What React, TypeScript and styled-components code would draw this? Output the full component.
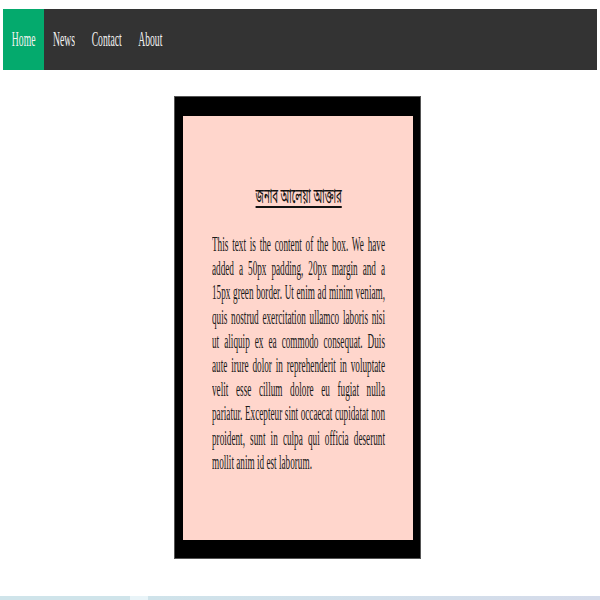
import React from "react";
import styled, { createGlobalStyle } from "styled-components";

const SQUEEZE = 0.46;

const GlobalStyle = createGlobalStyle`
  html, body { margin: 0; padding: 0; background: #ffffff; }
  body {
    padding: 9px 3px 0;
    font-family: "Liberation Serif", "Times New Roman", serif;
    color: #111111;
    overflow: hidden;
  }
`;

const Page = styled.div`
  display: flex;
  flex-direction: column;
`;

const NavBar = styled.nav`
  display: flex;
  align-items: stretch;
  height: 61px;
  background: #333333;
`;

const NavLink = styled.a<{ $w: number; $active?: boolean }>`
  display: flex;
  align-items: center;
  justify-content: center;
  width: ${(p) => p.$w}px;
  background: ${(p) => (p.$active ? "#04aa6d" : "transparent")};
  color: #f2f2f2;
  text-decoration: none;
  overflow: visible;
`;

const Squeeze = styled.span<{ $size: number }>`
  display: inline-block;
  flex: none;
  white-space: nowrap;
  font-size: ${(p) => p.$size}px;
  line-height: 1.15;
  transform: scaleX(${SQUEEZE});
  transform-origin: center center;
`;

const Main = styled.main`
  display: flex;
  justify-content: center;
  padding-right: 5px;
  margin-top: 27px;
`;

const Card = styled.section`
  width: 173px;
  border-style: solid;
  border-color: #000000;
  border-width: 19px 7px 18px 8px;
  background: #ffd6cc;
  padding: 70px 28px 66px 29px;
  box-shadow: 0 0 0 1px #555555;
`;

const Heading = styled.h2`
  display: flex;
  justify-content: center;
  align-items: center;
  margin: 0 0 22px;
  height: 24px;
  font-weight: normal;
  font-family: "Noto Sans Bengali", "Noto Serif Bengali", "Lohit Bengali", "Liberation Serif", sans-serif;
  text-decoration: underline;
  text-decoration-thickness: 2px;
  text-underline-offset: 3px;
  color: #111111;
`;

const TextBox = styled.div`
  width: 173px;
`;

const Paragraph = styled.p`
  margin: 0;
  width: 376px;
  font-size: 20px;
  line-height: 24.2px;
  text-align: justify;
  transform: scaleX(${173 / 376});
  transform-origin: 0 0;
  color: #1a1a1a;
`;

const Strip = styled.div`
  margin: 38px -3px 0;
  height: 4px;
  background: linear-gradient(
    90deg,
    #cfe4ea 0,
    #cfe4ea 130px,
    #e9f4f8 130px,
    #e9f4f8 148px,
    #cfe3ea 148px,
    #d5dbea 100%
  );
`;

const links = [
  { label: "Home", w: 41, active: true },
  { label: "News", w: 39 },
  { label: "Contact", w: 47 },
  { label: "About", w: 41 },
];

export default function App() {
  return (
    <>
      <GlobalStyle />
      <Page>
        <NavBar>
          {links.map((l) => (
            <NavLink key={l.label} href="#" $w={l.w} $active={l.active}>
              <Squeeze $size={21}>{l.label}</Squeeze>
            </NavLink>
          ))}
        </NavBar>
        <Main>
          <Card>
            <Heading>
              <Squeeze $size={21}>জনাব আলেয়া আক্তার</Squeeze>
            </Heading>
            <TextBox>
              <Paragraph>
                This text is the content of the box. We have added a 50px padding, 20px margin and a 15px
                green border. Ut enim ad minim veniam, quis nostrud exercitation ullamco laboris nisi ut
                aliquip ex ea commodo consequat. Duis aute irure dolor in reprehenderit in voluptate velit
                esse cillum dolore eu fugiat nulla pariatur. Excepteur sint occaecat cupidatat non proident,
                sunt in culpa qui officia deserunt mollit anim id est laborum.
              </Paragraph>
            </TextBox>
          </Card>
        </Main>
        <Strip />
      </Page>
    </>
  );
}
